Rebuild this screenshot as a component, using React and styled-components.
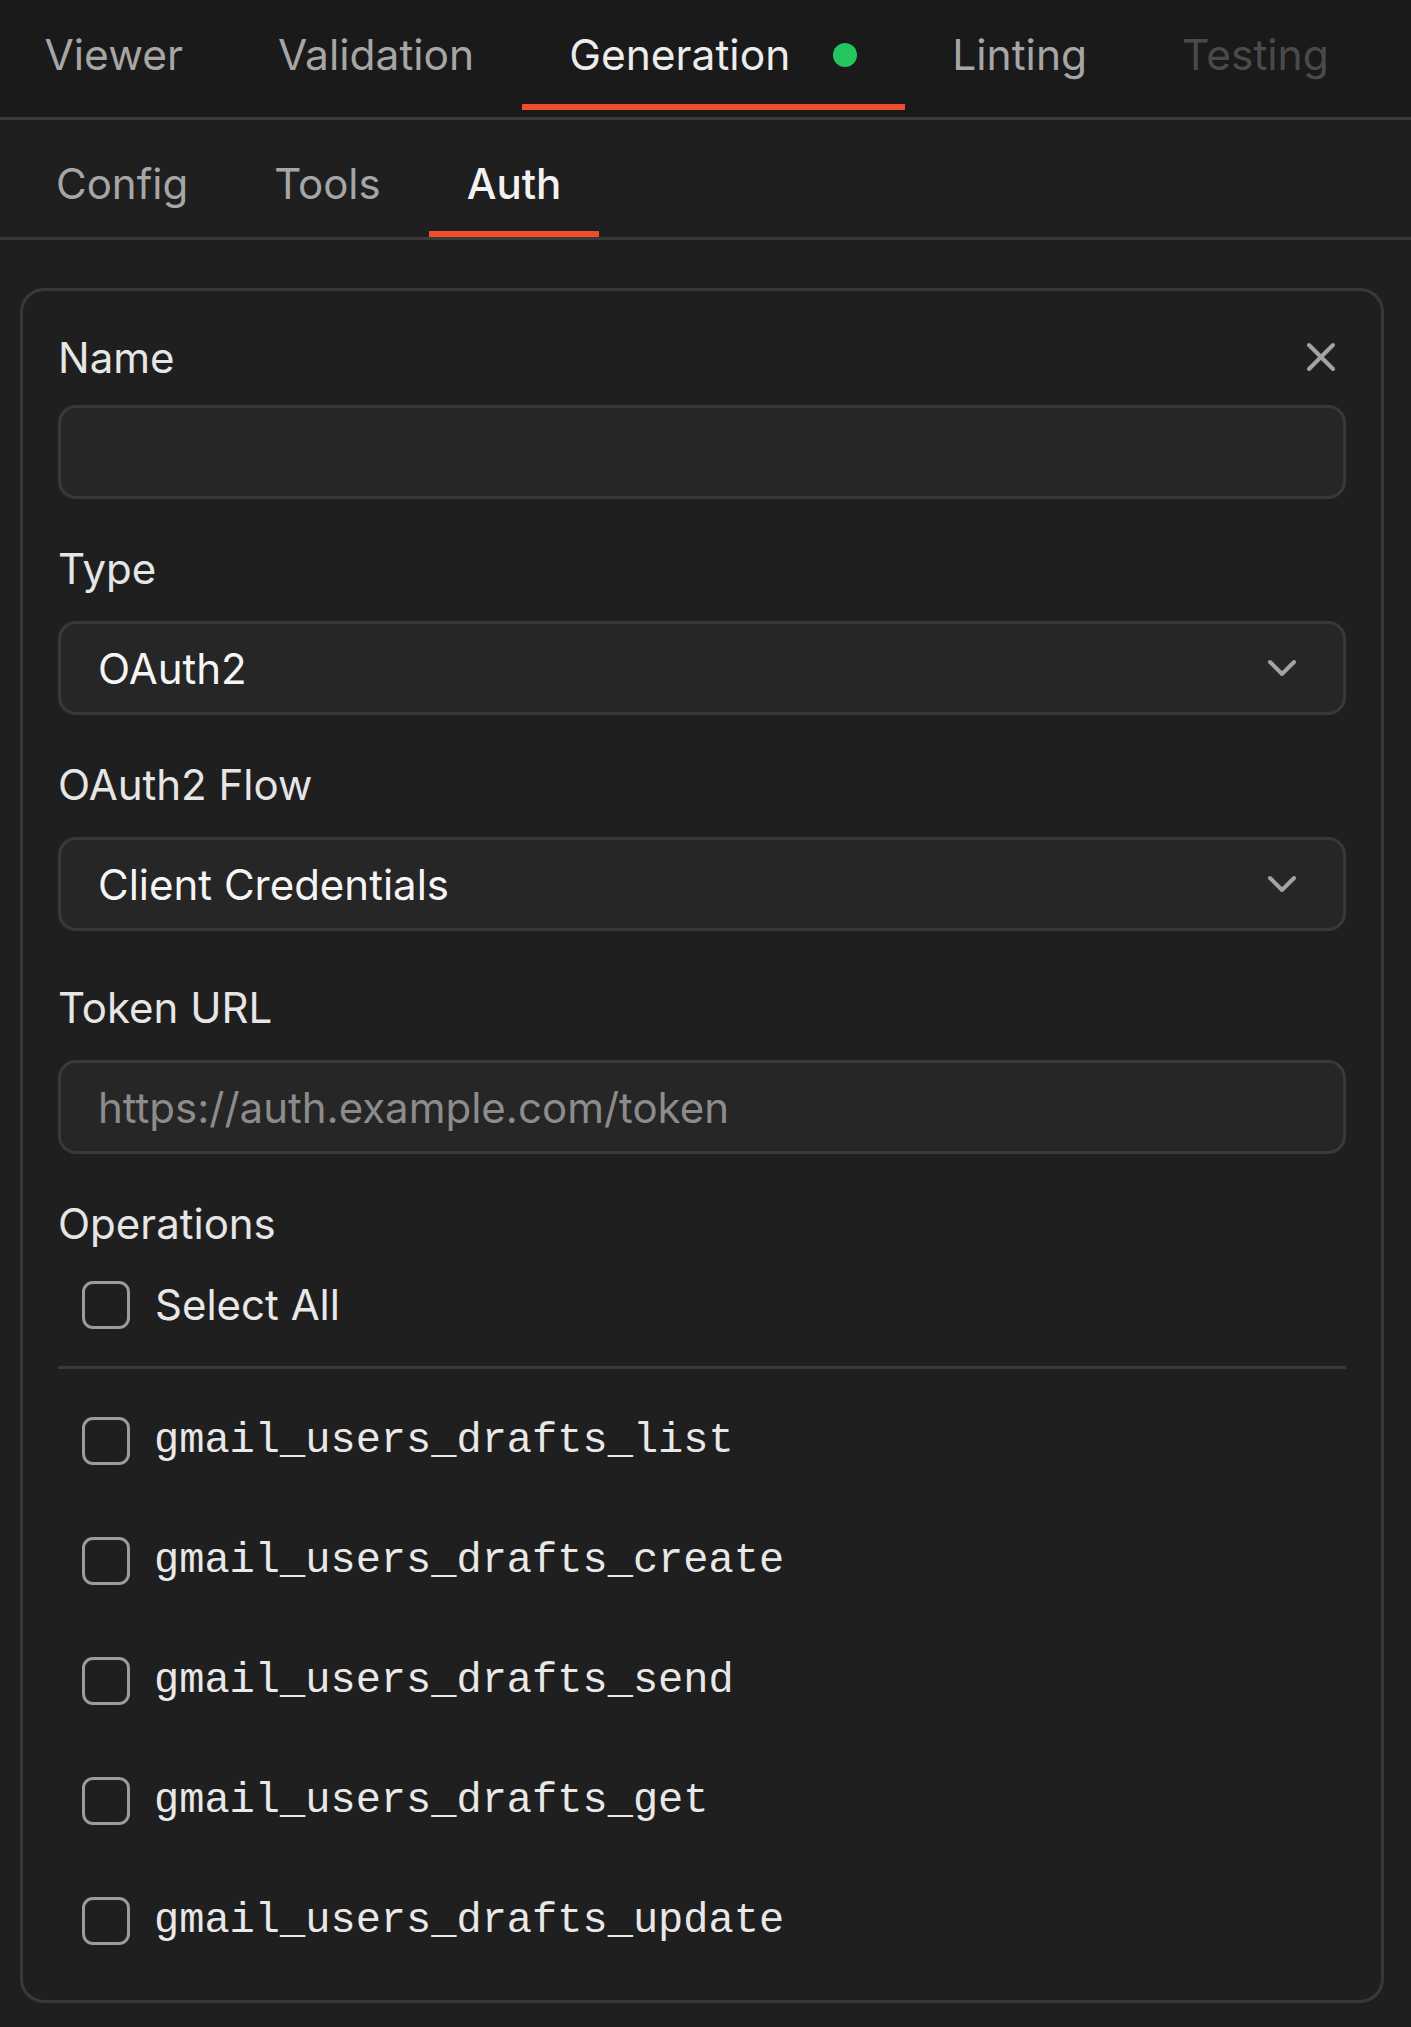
import React from 'react';
import styled, { createGlobalStyle } from 'styled-components';
import { X, ChevronDown } from 'lucide-react';

const GlobalStyle = createGlobalStyle`
  html, body {
    margin: 0;
    padding: 0;
    background: #1f1f1f;
    font-family: Inter, "Noto Sans", sans-serif;
  }
  * {
    box-sizing: border-box;
  }
`;

const colors = {
  topBar: '#1a1a1a',
  bg: '#1f1f1f',
  field: '#262626',
  border: '#393939',
  accent: '#f04e2a',
  green: '#22c55e',
  text: '#ececec',
  muted: '#a6a6a6',
  disabled: '#4a4a4a',
};

const Page = styled.div`
  min-height: 2027px;
  background: ${colors.bg};
`;

const TopTabs = styled.nav`
  display: flex;
  background: ${colors.topBar};
  padding-bottom: 7px;
  border-bottom: 3px solid ${colors.border};
`;

const TabList = styled.div`
  display: flex;
  margin-left: -3px;
`;

const Tab = styled.button`
  display: flex;
  align-items: center;
  gap: 43px;
  height: 110px;
  padding: 5px 47.5px 0;
  background: none;
  border: none;
  border-bottom: 6px solid ${(p) => (p.$active ? colors.accent : 'transparent')};
  font-family: inherit;
  font-size: 42.5px;
  font-weight: 400;
  line-height: 51px;
  color: ${(p) => (p.$disabled ? colors.disabled : p.$active ? colors.text : colors.muted)};
  cursor: pointer;
`;

const Dot = styled.span`
  width: 24px;
  height: 24px;
  border-radius: 50%;
  background: ${colors.green};
`;

const SubTabs = styled.nav`
  display: flex;
  gap: 10px;
  padding-left: 18px;
  border-bottom: 3px solid ${colors.border};
`;

const SubTab = styled.button`
  display: flex;
  align-items: center;
  height: 117px;
  padding: 15px 38px 0;
  background: none;
  border: none;
  border-bottom: 6px solid ${(p) => (p.$active ? colors.accent : 'transparent')};
  font-family: inherit;
  font-size: 42px;
  font-weight: ${(p) => (p.$active ? 500 : 400)};
  line-height: 51px;
  color: ${(p) => (p.$active ? '#f2f2f2' : colors.muted)};
  cursor: pointer;
`;

const Content = styled.main`
  padding: 48px 27px 27px 20px;
`;

const Card = styled.section`
  border: 3px solid ${colors.border};
  border-radius: 24px;
  padding: 35px;
`;

const FieldHeader = styled.div`
  display: flex;
  align-items: center;
  justify-content: space-between;
  height: 62px;
  margin-bottom: 17px;
`;

const Field = styled.div`
  margin-top: ${(p) => p.$gap || 44}px;
`;

const Label = styled.label`
  display: block;
  font-size: 42px;
  line-height: 51px;
  color: #e6e6e6;
  margin-bottom: ${(p) => (p.$inline ? 0 : 27)}px;
`;

const CloseButton = styled.button`
  display: flex;
  align-items: center;
  justify-content: center;
  padding: 7px 0;
  margin-right: 1px;
  background: none;
  border: none;
  color: #a3a3a3;
  cursor: pointer;
`;

const TextInput = styled.input`
  display: block;
  width: 100%;
  height: 94px;
  padding: 0 37px;
  background: ${colors.field};
  border: 3px solid ${colors.border};
  border-radius: 18px;
  font-family: inherit;
  font-size: 42px;
  color: #f5f5f5;
  outline: none;

  &::placeholder {
    color: #8c8c8c;
  }
`;

const Select = styled.div`
  display: flex;
  align-items: center;
  justify-content: space-between;
  height: 94px;
  padding: 0 37px;
  background: ${colors.field};
  border: 3px solid ${colors.border};
  border-radius: 18px;
  font-size: 42px;
  color: #f5f5f5;

  svg {
    color: #a3a3a3;
  }
`;

const SelectAllRow = styled.div`
  display: flex;
  align-items: center;
  gap: 25px;
  margin-top: 30px;
  padding: 0 0 36px 24px;
  border-bottom: 3px solid ${colors.border};
  font-size: 42px;
  color: #e8e8e8;
`;

const OpList = styled.ul`
  list-style: none;
  margin: 0;
  padding: 30px 0 2px 24px;
  display: flex;
  flex-direction: column;
  gap: 36px;
`;

const OpRow = styled.li`
  display: flex;
  align-items: center;
  gap: 24px;
  padding: 18px 0;
  font-family: "Liberation Mono", "Courier New", monospace;
  font-size: 42px;
  color: #e8e8e8;
`;

const Checkbox = styled.span`
  flex: none;
  width: 48px;
  height: 48px;
  border: 3px solid #9c9c9c;
  border-radius: 11px;
`;

const topTabs = [
  { label: 'Viewer' },
  { label: 'Validation' },
  { label: 'Generation', active: true, dot: true },
  { label: 'Linting' },
  { label: 'Testing', disabled: true },
];

const subTabs = ['Config', 'Tools', 'Auth'];

const operations = [
  'gmail_users_drafts_list',
  'gmail_users_drafts_create',
  'gmail_users_drafts_send',
  'gmail_users_drafts_get',
  'gmail_users_drafts_update',
];

export default function App() {
  return (
    <Page>
      <GlobalStyle />
      <TopTabs>
        <TabList>
          {topTabs.map((t) => (
            <Tab key={t.label} $active={t.active} $disabled={t.disabled}>
              {t.label}
              {t.dot && <Dot />}
            </Tab>
          ))}
        </TabList>
      </TopTabs>

      <SubTabs>
        {subTabs.map((t) => (
          <SubTab key={t} $active={t === 'Auth'}>
            {t}
          </SubTab>
        ))}
      </SubTabs>

      <Content>
        <Card>
          <FieldHeader>
            <Label $inline>Name</Label>
            <CloseButton aria-label="Remove">
              <X size={48} strokeWidth={2} />
            </CloseButton>
          </FieldHeader>
          <TextInput />

          <Field>
            <Label>Type</Label>
            <Select>
              OAuth2
              <ChevronDown size={48} strokeWidth={2} />
            </Select>
          </Field>

          <Field>
            <Label>OAuth2 Flow</Label>
            <Select>
              Client Credentials
              <ChevronDown size={48} strokeWidth={2} />
            </Select>
          </Field>

          <Field $gap={51}>
            <Label>Token URL</Label>
            <TextInput placeholder="https://auth.example.com/token" />
          </Field>

          <Field>
            <Label $inline>Operations</Label>
            <SelectAllRow>
              <Checkbox />
              Select All
            </SelectAllRow>
            <OpList>
              {operations.map((op) => (
                <OpRow key={op}>
                  <Checkbox />
                  {op}
                </OpRow>
              ))}
            </OpList>
          </Field>
        </Card>
      </Content>
    </Page>
  );
}
